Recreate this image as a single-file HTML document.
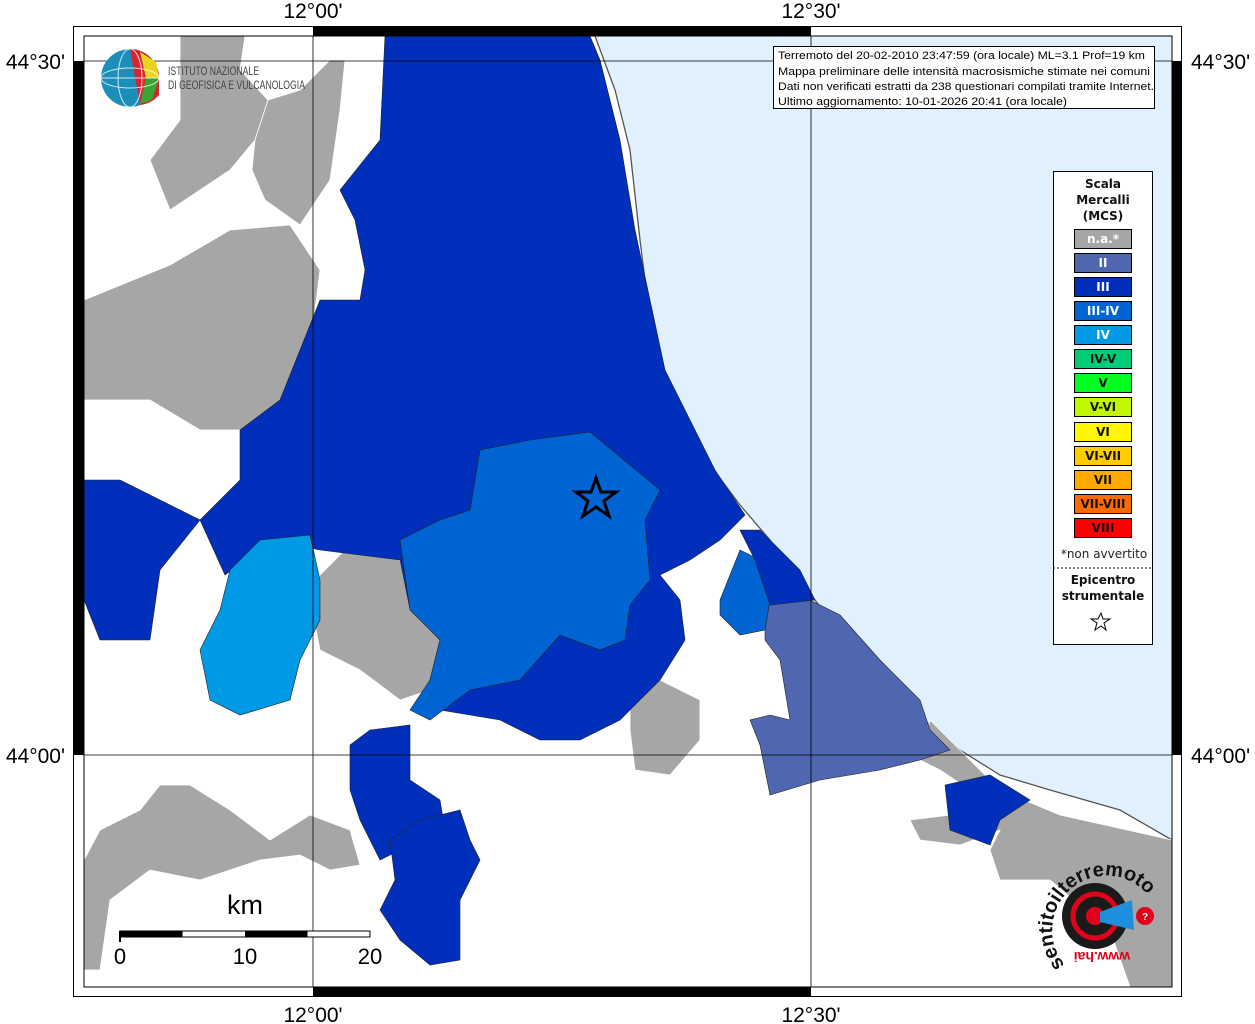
<!DOCTYPE html>
<html><head><meta charset="utf-8"><style>
body{margin:0;background:#fff;width:1255px;height:1024px;overflow:hidden;font-family:"Liberation Sans","DejaVu Sans",sans-serif}
</style></head><body>
<svg width="1255" height="1024" viewBox="0 0 1255 1024" xmlns="http://www.w3.org/2000/svg" style="position:absolute;left:0;top:0">
<rect x="0" y="0" width="1255" height="1024" fill="#fff"/>
<polygon fill="#e0f0fc" points="595,36 1172,36 1172,840 1120,810 1050,790 1000,775 960,750 900,700 830,620 770,540 740,505 710,465 680,420 665,380 650,320 640,240 630,150 615,90"/>
<polyline fill="none" stroke="#555" stroke-width="1.3" points="595,36 615,90 630,150 640,240 650,320 665,380 680,420 710,465 740,505 770,540 830,620 900,700 960,750 1000,775 1050,790 1120,810 1172,840"/>
<g fill="#a6a6a6" stroke="#fff" stroke-width="0.8">
<polygon points="84,300 170,265 230,230 290,225 320,270 310,350 280,410 240,430 200,430 150,400 84,400"/>
<polygon points="150,160 180,120 180,36 245,36 240,70 268,100 255,140 230,170 170,210"/>
<polygon points="255,140 268,100 300,90 330,60 345,60 340,110 330,180 300,225 265,200 252,170"/>
<polygon points="320,575 350,545 400,560 410,610 440,640 430,690 400,700 360,670 320,650 310,600"/>
<polygon points="84,860 100,830 140,810 160,785 190,785 230,810 270,840 310,815 350,830 360,865 330,870 300,855 260,860 200,880 150,870 110,900 100,970 84,970"/>
<polygon points="630,700 660,680 700,700 700,740 670,775 635,770 630,730"/>
<polygon points="930,720 970,760 1000,790 970,790 940,770 920,760"/>
<polygon points="1000,790 1060,815 1172,840 1172,987 1130,987 1110,930 1050,880 1000,880 990,850 1000,830 960,845 920,840 910,820 950,815 945,785"/>
</g>
<g stroke="#222" stroke-width="0.6">
<polygon fill="#0030bb" points="385,36 590,36 600,60 620,140 635,230 650,300 665,370 690,420 715,470 745,515 720,540 690,560 660,575 680,600 685,640 660,680 620,720 580,740 540,740 500,720 440,710 430,680 440,640 410,610 400,560 320,550 270,540 225,575 200,520 240,480 240,430 280,400 320,300 360,300 365,270 355,220 340,190 380,140"/>
<polygon fill="#0065d2" points="480,450 530,440 590,432 660,490 645,520 650,580 630,605 625,640 600,650 560,635 520,680 470,690 430,720 410,710 430,680 440,640 410,610 400,540 440,520 470,510"/>
<polygon fill="#0030bb" points="84,480 120,480 200,520 160,570 150,640 100,640 84,600"/>
<polygon fill="#0099e6" points="230,570 260,540 310,535 320,580 320,620 300,660 290,700 240,715 210,700 200,650 220,610"/>
<polygon fill="#4f66b0" points="765,605 810,600 840,615 880,660 920,700 930,730 950,750 920,760 880,770 820,780 770,795 760,745 750,720 770,715 790,720 780,660 765,640"/>
<polygon fill="#0030bb" points="945,785 990,775 1030,800 1000,820 990,845 950,830"/>
<polygon fill="#0030bb" points="350,745 370,730 410,725 410,780 440,800 445,830 400,850 380,860 360,820 350,790"/>
<polygon fill="#0030bb" points="390,840 420,820 460,810 470,840 480,860 460,900 460,960 430,965 400,940 380,910 395,880"/>
<polygon fill="#0065d2" points="720,600 740,550 760,560 770,600 765,630 740,635 720,615"/>
<polygon fill="#0030bb" points="740,530 760,530 800,570 815,600 770,605 755,560"/>
</g>
<polygon points="596,478 601,492 616,492 604,501 609,516 596,507 583,516 588,501 576,492 591,492" fill="none" stroke="#000" stroke-width="3"/>
<g stroke="#000" stroke-width="0.8">
<line x1="313" y1="36" x2="313" y2="987"/><line x1="811" y1="36" x2="811" y2="987"/>
<line x1="84" y1="61" x2="1172" y2="61"/><line x1="84" y1="755" x2="1172" y2="755"/>
</g>
<rect x="73.5" y="26.5" width="1108" height="970" fill="none" stroke="#000"/>
<rect x="84" y="36" width="1088" height="951" fill="none" stroke="#000"/>
<rect x="313" y="27" width="498" height="9" fill="#000"/>
<rect x="313" y="987" width="498" height="9" fill="#000"/>
<rect x="74" y="61" width="10" height="694" fill="#000"/>
<rect x="1172" y="61" width="10" height="694" fill="#000"/>
<g font-size="21" fill="#000">
<text x="313" y="18" text-anchor="middle">12°00'</text>
<text x="811" y="18" text-anchor="middle">12°30'</text>
<text x="313" y="1022" text-anchor="middle">12°00'</text>
<text x="811" y="1022" text-anchor="middle">12°30'</text>
<text x="65" y="69" text-anchor="end">44°30'</text>
<text x="65" y="763" text-anchor="end">44°00'</text>
<text x="1191" y="69">44°30'</text>
<text x="1191" y="763">44°00'</text>
</g>
<rect x="120" y="931" width="250" height="6" fill="#fff" stroke="#000"/>
<rect x="120" y="931" width="62.5" height="6" fill="#000"/>
<rect x="245" y="931" width="62.5" height="6" fill="#000"/>
<line x1="120" y1="931" x2="120" y2="942" stroke="#000" stroke-width="2"/>
<g font-size="22" fill="#000" text-anchor="middle">
<text x="245" y="914" font-size="27">km</text>
<text x="120" y="964">0</text><text x="245" y="964">10</text><text x="370" y="964">20</text>
</g>
<circle cx="130" cy="78" r="29" fill="#1b8fb8"/>
<path d="M130,49 A29,29 0 0 1 159,78 L159,95 A29,29 0 0 1 140,105 Z" fill="#d8242f"/>
<path d="M140,52 L156,62 L159,78 L146,78 Z" fill="#e8d520"/>
<path d="M146,78 L159,78 L152,100 L140,104 Z" fill="#3aa535"/>
<g stroke="#fff" stroke-width="1" fill="none" opacity="0.8"><ellipse cx="130" cy="78" rx="12" ry="29"/><ellipse cx="130" cy="78" rx="29" ry="10"/><line x1="101" y1="78" x2="159" y2="78"/></g>
<text x="168" y="75" font-size="12" fill="#444" textLength="91" lengthAdjust="spacingAndGlyphs">ISTITUTO NAZIONALE</text>
<text x="168" y="89" font-size="12" fill="#444" textLength="137" lengthAdjust="spacingAndGlyphs">DI GEOFISICA E VULCANOLOGIA</text>
<rect x="773.5" y="46.5" width="381" height="62" fill="#fff" stroke="#000"/>
<g font-size="11" fill="#000">
<text x="778" y="59" textLength="367" lengthAdjust="spacingAndGlyphs">Terremoto del 20-02-2010 23:47:59 (ora locale) ML=3.1 Prof=19 km</text>
<text x="778" y="75" textLength="372" lengthAdjust="spacingAndGlyphs">Mappa preliminare delle intensità macrosismiche stimate nei comuni</text>
<text x="778" y="90" textLength="376" lengthAdjust="spacingAndGlyphs">Dati non verificati estratti da 238 questionari compilati tramite Internet.</text>
<text x="778" y="105" textLength="289" lengthAdjust="spacingAndGlyphs">Ultimo aggiornamento: 10-01-2026 20:41 (ora locale)</text>
</g>
<rect x="1053.5" y="171.5" width="99" height="473" fill="#fff" stroke="#000"/>
<g font-size="12" font-weight="bold" text-anchor="middle" fill="#111" font-family="DejaVu Sans,sans-serif">
<text x="1103" y="188">Scala</text><text x="1103" y="204">Mercalli</text><text x="1103" y="220">(MCS)</text>
</g>
<g stroke="#000" stroke-width="1">
<rect x="1074.5" y="229.5" width="57" height="19" fill="#a6a6a6"/>
<rect x="1074.5" y="253.5" width="57" height="19" fill="#4f66b0"/>
<rect x="1074.5" y="277.5" width="57" height="19" fill="#0030bb"/>
<rect x="1074.5" y="301.5" width="57" height="19" fill="#0065d2"/>
<rect x="1074.5" y="325.5" width="57" height="19" fill="#0099e6"/>
<rect x="1074.5" y="349.5" width="57" height="19" fill="#00cc78"/>
<rect x="1074.5" y="373.5" width="57" height="19" fill="#00ff20"/>
<rect x="1074.5" y="397.5" width="57" height="19" fill="#c0f800"/>
<rect x="1074.5" y="422.5" width="57" height="19" fill="#fff600"/>
<rect x="1074.5" y="446.5" width="57" height="19" fill="#ffcc00"/>
<rect x="1074.5" y="470.5" width="57" height="19" fill="#ffa800"/>
<rect x="1074.5" y="494.5" width="57" height="19" fill="#ff6a00"/>
<rect x="1074.5" y="518.5" width="57" height="19" fill="#ff0000"/>
</g>
<g font-size="12" font-weight="bold" text-anchor="middle" font-family="DejaVu Sans,sans-serif">
<text x="1103" y="243" fill="#fff">n.a.*</text>
<text x="1103" y="267" fill="#fff">II</text>
<text x="1103" y="291" fill="#fff">III</text>
<text x="1103" y="315" fill="#fff">III-IV</text>
<text x="1103" y="339" fill="#fff">IV</text>
<text x="1103" y="363" fill="#111">IV-V</text>
<text x="1103" y="387" fill="#111">V</text>
<text x="1103" y="411" fill="#111">V-VI</text>
<text x="1103" y="436" fill="#111">VI</text>
<text x="1103" y="460" fill="#111">VI-VII</text>
<text x="1103" y="484" fill="#111">VII</text>
<text x="1103" y="508" fill="#111">VII-VIII</text>
<text x="1103" y="532" fill="#111">VIII</text>
</g>
<text x="1104" y="558" font-size="12" text-anchor="middle" fill="#222" font-family="DejaVu Sans,sans-serif">*non avvertito</text>
<line x1="1053" y1="568" x2="1152" y2="568" stroke="#000" stroke-dasharray="2,2"/>
<g font-size="12" font-weight="bold" text-anchor="middle" fill="#111" font-family="DejaVu Sans,sans-serif">
<text x="1103" y="584">Epicentro</text><text x="1103" y="600">strumentale</text>
</g>
<polygon points="1101,613 1103,619 1110,619 1104,623 1106,630 1101,626 1095,630 1097,623 1091,619 1098,619" fill="none" stroke="#000" stroke-width="1"/>
<circle cx="1095" cy="916" r="33" fill="#1a1a1a"/>
<circle cx="1095" cy="916" r="22" fill="none" stroke="#e2001a" stroke-width="5"/>
<circle cx="1095" cy="916" r="9" fill="#e2001a"/>
<polygon points="1100,912 1132,900 1134,930 1100,922" fill="#1e8fdc"/>
<circle cx="1145" cy="916" r="9" fill="#e2001a"/>
<text x="1145" y="920" font-size="10" fill="#fff" text-anchor="middle" font-weight="bold">?</text>
<path id="arc" d="M1065,965 A46,46 0 1 1 1148,895" fill="none"/>
<text font-size="20" fill="#111" font-weight="bold"><textPath href="#arc">sentitoilterremoto<tspan fill="#e2001a">.it</tspan></textPath></text>
<text x="1100" y="968" font-size="14" fill="#e2001a" font-weight="bold" transform="rotate(180 1115 960)">www.hai</text>
</svg>
</body></html>
